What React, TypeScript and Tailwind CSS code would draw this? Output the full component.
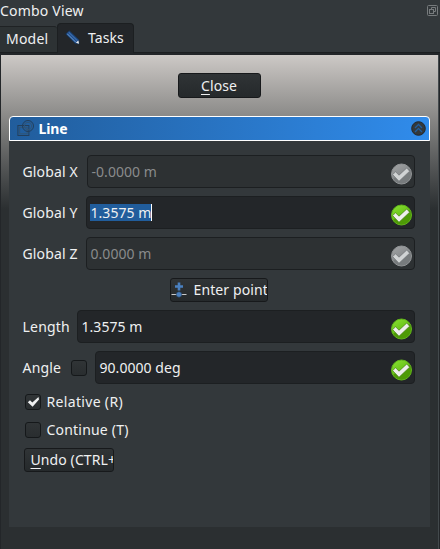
import type { ReactNode } from "react";

function StatusIcon({ active }: { active: boolean }) {
  const id = active ? "ok" : "off";
  return (
    <svg className="mt-[5px] h-[22px] w-[22px] shrink-0" viewBox="0 0 22 22">
      <defs>
        <linearGradient id={id} x1="0" y1="0" x2="0.6" y2="1">
          <stop offset="0" stopColor={active ? "#8ae234" : "#a3a5a6"} />
          <stop offset="0.55" stopColor={active ? "#6cc51b" : "#8b8e90"} />
          <stop offset="0.6" stopColor={active ? "#4e9a06" : "#777b7d"} />
          <stop offset="1" stopColor={active ? "#4e9a06" : "#777b7d"} />
        </linearGradient>
      </defs>
      <circle cx="11.5" cy="11" r="10" fill={`url(#${id})`} stroke={active ? "#62b51c" : "#929597"} />
      <path d="M2.6 11.6 L5.6 8.8 L9 12.2 L16.8 5 L19.6 8.2 L9 18.2 Z" fill={active ? "#eeeeec" : "#d0d3d4"} stroke={active ? "#397306" : "#686c6e"} strokeWidth="0.6" />
    </svg>
  );
}

function Field({ value, disabled = false, selected = false }: { value: string; disabled?: boolean; selected?: boolean }) {
  return (
    <div className={`flex h-[33px] min-w-0 flex-1 items-center justify-between rounded-[4px] border border-[#1c1f21] pr-[2px] pl-[3px] ${disabled ? "bg-[#2d3133] text-[#898b8c]" : "bg-[#232629] text-[#eff0f1]"}`}>
      <span className={`pl-px tracking-[0.05px] whitespace-nowrap ${selected ? "border-r border-white bg-[#215d9c] leading-[17px]" : ""}`}>{value}</span>
      <StatusIcon active={!disabled} />
    </div>
  );
}

function CheckBox({ checked = false }: { checked?: boolean }) {
  return (
    <span className="flex h-4 w-4 shrink-0 items-center justify-center rounded-[3px] border border-[#15181a] bg-linear-to-b from-[#303436] to-[#292d2f]">
      {checked && (
        <svg className="h-3.5 w-3.5" viewBox="0 0 14 14">
          <path d="M1.8 7.2 L4 5.2 L6.3 7.5 L12.5 2 L13 4.4 L6.6 11.8 Z" fill="#eff0f1" />
        </svg>
      )}
    </span>
  );
}

function Row({ children }: { children: ReactNode }) {
  return <div className="flex h-[33px] items-center">{children}</div>;
}

export default function App() {
  return (
    <main className="flex h-[549px] w-[440px] flex-col overflow-hidden bg-[#33383b] font-['Noto_Sans',sans-serif] text-[14px] leading-[20px] text-[#eff0f1]">
      <header className="flex h-[23px] shrink-0 items-start justify-between pr-[2px]">
        <h1 className="mt-px tracking-[0.2px]">Combo View</h1>
        <svg className="mt-[5px] h-[11px] w-[11px]" viewBox="0 0 11 11" fill="none" stroke="#777b7d">
          <rect x="0.5" y="0.5" width="10" height="10" rx="1" />
          <path d="M4.5 4 V2.5 H8.5 V6.5 H7" />
          <rect x="2.5" y="4.5" width="4" height="4" />
        </svg>
      </header>
      <nav className="flex h-[30px] shrink-0 items-end border-b border-[#1c1f21]">
        <div className="h-[26px] w-[57px] rounded-tr-[3px] border-t border-[#1f2224] bg-[#2d3234] pt-[2px] pl-[6px] tracking-[0.2px]">Model</div>
        <div className="-mb-px flex h-[30px] w-[77px] items-start rounded-t-[4px] border border-b-0 border-[#1c1f21] bg-[#232629] pt-[4px] pl-[7px]">
          <svg className="mt-[2px] h-4 w-4 shrink-0" viewBox="0 0 16 16">
            <path d="M0.8 4 L4.2 0.8 L13.6 9.6 L14 13.8 L10 13.2 Z" fill="#204a87" stroke="#18395e" strokeWidth="0.8" />
            <path d="M2.3 3.8 L10.8 12.2" stroke="#5684bb" strokeWidth="1.1" />
            <path d="M3.8 2.4 L12.3 10.6" stroke="#3c70ad" strokeWidth="1.1" />
            <path d="M10.8 12.8 L13.4 10.6 L14 13.8 Z" fill="#eeeeec" />
          </svg>
          <span className="ml-[7px] tracking-[0.1px]">Tasks</span>
        </div>
      </nav>
      <div className="flex min-h-0 flex-1 bg-[#232629] pt-[2px] pr-[1px] pl-px">
        <section className="flex flex-1 flex-col items-center border-r border-[#43494c] bg-[#2b2f31] bg-linear-to-b from-[#cdc9c6] from-0% via-[#91908e] via-[55px] to-[#2b2f31] to-[154px] pt-[18px]">
          <button className="mr-px h-[25px] w-[83px] shrink-0 rounded-[3px] border border-[#17191b] bg-linear-to-b from-[#303436] to-[#25292b] leading-[23px] tracking-[0.1px]">
            <span className="underline underline-offset-[3px]">C</span>lose
          </button>
          <article className="mt-[18px] mr-px flex h-[411px] w-[421px] flex-col">
            <header className="flex h-[25px] shrink-0 items-center rounded-t-[4px] border border-white bg-linear-to-r from-[#215d9c] to-[#308cec] pr-[3px] pl-[7px]">
              <svg className="h-[17px] w-[18px]" viewBox="0 0 18 17" fill="none" stroke="#233f5c">
                <rect x="0.9" y="5.5" width="11" height="10" />
                <rect x="2.6" y="7.3" width="7.6" height="6.5" stroke="#315475" />
                <circle cx="11" cy="6" r="5.5" />
                <circle cx="11" cy="6" r="3.7" stroke="#315475" />
              </svg>
              <b className="ml-[4px] flex-1 tracking-[-0.1px] text-white">Line</b>
              <svg className="h-[15px] w-[15px]" viewBox="0 0 15 15" fill="none">
                <circle cx="7.5" cy="7.5" r="6.8" fill="#33383b" stroke="#232629" />
                <path d="M4 7 L7.5 3.5 L11 7 M4 11 L7.5 7.5 L11 11" stroke="#215d9c" strokeWidth="1.3" />
              </svg>
            </header>
            <div className="flex flex-1 flex-col bg-[#33383b] pt-[14px] pr-[15px] pl-[14px]">
              <div className="flex flex-col gap-2">
                <Row><span className="w-[64px] tracking-[0.15px]">Global X</span><Field value="-0.0000 m" disabled /></Row>
                <Row><span className="w-[63px] tracking-[0.15px]">Global Y</span><Field value="1.3575 m" selected /></Row>
                <Row><span className="w-[63px] tracking-[0.15px]">Global Z</span><Field value="0.0000 m" disabled /></Row>
              </div>
              <button className="mt-2 ml-[147px] flex h-[24px] w-[98px] items-center overflow-hidden rounded-[3px] border border-[#17191b] bg-linear-to-b from-[#303436] to-[#25292b]">
                <svg className="h-4 w-4 shrink-0" viewBox="0 0 16 16">
                  <path d="M8 0.5 V8.5 M4 4.5 H12" stroke="#4a80c0" strokeWidth="2.6" />
                  <path d="M0.5 12.5 H15.5" stroke="#c9cbcc" strokeWidth="1.2" />
                  <circle cx="8" cy="12.5" r="2.7" fill="#4a80c0" stroke="#26425f" strokeWidth="0.6" />
                </svg>
                <span className="ml-[7px] tracking-[0.12px] whitespace-nowrap">Enter point</span>
              </button>
              <div className="mt-2 flex flex-col gap-2">
                <Row><span className="w-[54px] tracking-[0.2px]">Length</span><Field value="1.3575 m" /></Row>
                <Row><span className="w-[48px] tracking-[0.2px]">Angle</span><CheckBox /><span className="w-2" /><Field value="90.0000 deg" /></Row>
              </div>
              <label className="mt-2 ml-[2px] flex h-[20px] items-center gap-[6px] tracking-[0.33px]"><CheckBox checked />Relative (R)</label>
              <label className="mt-2 ml-[2px] flex h-[20px] items-center gap-[6px] tracking-[0.2px]"><CheckBox />Continue (T)</label>
              <button className="mt-2 ml-px h-[24px] w-[90px] overflow-hidden rounded-[3px] border border-[#17191b] bg-linear-to-b from-[#303436] to-[#25292b] pl-[6px] text-left leading-[22px] tracking-[0.1px] whitespace-nowrap">
                <span className="underline underline-offset-[3px]">U</span>ndo (CTRL+
              </button>
            </div>
          </article>
        </section>
      </div>
    </main>
  );
}
